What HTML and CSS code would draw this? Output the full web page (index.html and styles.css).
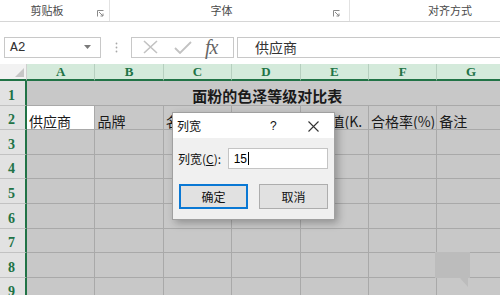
FILE: index.html
```html
<!DOCTYPE html>
<html>
<head>
<meta charset="utf-8">
<link rel="stylesheet" href="styles.css">
</head>
<body>
<div class="app">
  <div class="ribbon">
    <div class="grp g1"><span class="lbl">剪贴板</span><svg class="launch" width="7" height="7" viewBox="0 0 7 7"><path d="M0.5 6.5V0.5H6.5" fill="none" stroke="#8a8a8a"/><path d="M2 2L6 6M6 3.5V6H3.5" fill="none" stroke="#8a8a8a"/></svg></div>
    <div class="grp g2"><span class="lbl">字体</span><svg class="launch" width="7" height="7" viewBox="0 0 7 7"><path d="M0.5 6.5V0.5H6.5" fill="none" stroke="#8a8a8a"/><path d="M2 2L6 6M6 3.5V6H3.5" fill="none" stroke="#8a8a8a"/></svg></div>
    <div class="grp g3"><span class="lbl">对齐方式</span></div>
  </div>

  <div class="fbar">
    <div class="namebox"><span class="ref">A2</span><svg width="7" height="4" viewBox="0 0 7 4"><path d="M0 0H7L3.5 4Z" fill="#7a7a7a"/></svg></div>
    <svg class="dots" width="3" height="11" viewBox="0 0 3 11"><circle cx="1.5" cy="1.5" r="0.9" fill="#a8a8a8"/><circle cx="1.5" cy="5.5" r="0.9" fill="#a8a8a8"/><circle cx="1.5" cy="9.5" r="0.9" fill="#a8a8a8"/></svg>
    <div class="fxbox">
      <svg width="15" height="14" viewBox="0 0 15 14"><path d="M1 1L14 13M14 1L1 13" stroke="#c2c2c2" stroke-width="1.6"/></svg>
      <svg width="18" height="13" viewBox="0 0 18 13"><path d="M1 7L6 12L17 1" fill="none" stroke="#c2c2c2" stroke-width="1.8"/></svg>
      <span class="fx">fx</span>
    </div>
    <div class="finput">供应商</div>
  </div>

  <div class="sheet">
    <div class="corner"><span class="tri"></span></div>
    <div class="ch">A</div><div class="ch">B</div><div class="ch">C</div><div class="ch">D</div><div class="ch">E</div><div class="ch">F</div><div class="ch">G</div>

    <div class="rh">1</div>
    <div class="c title">面粉的色泽等级对比表</div>

    <div class="rh">2</div>
    <div class="c active">供应商</div><div class="c">品牌</div><div class="c">名称</div><div class="c">等级</div><div class="c">色泽值(K.</div><div class="c">合格率(%)</div><div class="c">备注</div>

    <div class="rh">3</div>
    <div class="c"></div><div class="c"></div><div class="c"></div><div class="c"></div><div class="c"></div><div class="c"></div><div class="c"></div>
    <div class="rh">4</div>
    <div class="c"></div><div class="c"></div><div class="c"></div><div class="c"></div><div class="c"></div><div class="c"></div><div class="c"></div>
    <div class="rh">5</div>
    <div class="c"></div><div class="c"></div><div class="c"></div><div class="c"></div><div class="c"></div><div class="c"></div><div class="c"></div>
    <div class="rh">6</div>
    <div class="c"></div><div class="c"></div><div class="c"></div><div class="c"></div><div class="c"></div><div class="c"></div><div class="c"></div>
    <div class="rh">7</div>
    <div class="c"></div><div class="c"></div><div class="c"></div><div class="c"></div><div class="c"></div><div class="c"></div><div class="c"></div>
    <div class="rh">8</div>
    <div class="c"></div><div class="c"></div><div class="c"></div><div class="c"></div><div class="c"></div><div class="c"></div><div class="c"></div>
    <div class="rh">9</div>
    <div class="c"></div><div class="c"></div><div class="c"></div><div class="c"></div><div class="c"></div><div class="c"></div><div class="c"></div>
  </div>

  <div class="dialog">
    <div class="dtitle"><span class="dname">列宽</span><span class="q">?</span><svg class="close" width="11" height="11" viewBox="0 0 11 11"><path d="M0.5 0.5L10.5 10.5M10.5 0.5L0.5 10.5" stroke="#333" stroke-width="1.1"/></svg></div>
    <div class="dbody">
      <div class="drow"><span class="dlbl">列宽(<u>C</u>):</span><div class="dinput">15<span class="caret"></span></div></div>
      <div class="btns"><div class="btn primary">确定</div><div class="btn">取消</div></div>
    </div>
  </div>

  <svg class="bubble" width="36" height="36" viewBox="0 0 36 36"><path d="M0 0H35V26H33L33 35L25 26H0Z" fill="#bcbcbc"/></svg>
</div>
</body>
</html>
```

FILE: styles.css
```css
* { box-sizing: border-box; }
html, body { margin: 0; padding: 0; }
body {
  width: 500px;
  height: 295px;
  overflow: hidden;
  background: #fff;
  font-family: "Noto Sans CJK SC", "Noto Sans", sans-serif;
}
.app {
  position: relative;
  width: 500px;
  height: 295px;
  overflow: hidden;
}

/* ribbon group labels */
.ribbon {
  display: flex;
  height: 22px;
  border-bottom: 1px solid #d6d6d6;
  background: #fff;
}
.grp {
  display: flex;
  align-items: center;
  height: 21px;
  border-right: 1px solid #e2e2e2;
}
.g1 { width: 110px; padding-right: 5px; }
.g2 { width: 240px; padding-right: 9px; }
.g3 { flex: 1; border-right: none; padding-left: 78px; }
.lbl {
  flex: 1;
  text-align: center;
  font-size: 11px;
  color: #4a4a4a;
  line-height: 1;
}
.g1 .lbl { padding-right: 3px; }
.g3 .lbl { flex: none; }
.launch { margin-top: 5px; }

/* formula bar */
.fbar {
  display: flex;
  align-items: center;
  height: 41px;
  padding: 9px 0 0 4px;
}
.namebox {
  width: 97px;
  height: 21px;
  border: 1px solid #c8c8c8;
  display: flex;
  align-items: center;
  justify-content: space-between;
  padding: 0 9px 0 5px;
}
.ref {
  font-family: "Liberation Mono", monospace;
  font-size: 13px;
  color: #333;
}
.dots { margin-left: 14px; margin-right: 13px; }
.fxbox {
  width: 103px;
  height: 21px;
  border: 1px solid #c8c8c8;
  display: flex;
  align-items: center;
  padding-left: 11px;
  gap: 16px;
}
.fx {
  font-family: "Liberation Serif", serif;
  font-style: italic;
  font-size: 20px;
  color: #666;
  margin-left: -3px;
  letter-spacing: -1px;
  line-height: 1;
}
.finput {
  flex: 1;
  height: 21px;
  margin-left: 3px;
  border-top: 1px solid #c8c8c8;
  border-bottom: 1px solid #c8c8c8;
  border-left: 1px solid #c8c8c8;
  padding-left: 17px;
  font-size: 14px;
  line-height: 19px;
  color: #333;
}

/* sheet */
.sheet {
  margin-top: 1px;
  display: grid;
  grid-template-columns: 27px repeat(7, 68.4px);
  grid-template-rows: 17px repeat(9, 24.6px);
  background: #c8c8c8;
}
.corner {
  position: relative;
  background: #f2f2f2;
  border-right: 1px solid #d0d0d0;
  border-bottom: 2px solid #217346;
}
.tri {
  position: absolute;
  right: 2px;
  bottom: 2px;
  width: 0;
  height: 0;
  border-left: 9px solid transparent;
  border-bottom: 9px solid #c6c6c6;
}
.ch {
  background: #d4eadb;
  border-right: 1px solid #b6cfbf;
  border-bottom: 2px solid #217346;
  text-align: center;
  font-family: "Liberation Serif", serif;
  font-weight: bold;
  font-size: 13px;
  line-height: 15px;
  color: #217346;
}
.rh {
  background: #e2e2e2;
  border-right: 2px solid #217346;
  border-bottom: 1px solid #c2c2c2;
  display: flex;
  align-items: flex-end;
  justify-content: center;
  padding-bottom: 0;
  padding-right: 2px;
  font-family: "Liberation Serif", serif;
  font-weight: bold;
  font-size: 14px;
  line-height: 19px;
  color: #217346;
}
.c {
  border-right: 1px solid #a9a9a9;
  border-bottom: 1px solid #a9a9a9;
  overflow: hidden;
  white-space: nowrap;
  font-size: 14px;
  color: #1a1a1a;
  padding: 0 0 0 2px;
  line-height: 16px;
  display: flex;
  align-items: flex-end;
}
.c.title {
  grid-column: 2 / 9;
  justify-content: center;
  font-weight: bold;
  font-size: 15px;
  line-height: 19px;
  padding: 0 0 0 2px;
  border-right: none;
}
.c.active { background: #fff; }

/* dialog */
.dialog {
  position: absolute;
  left: 172px;
  top: 112px;
  width: 163px;
  height: 108px;
  background: #f0f0f0;
  border: 1px solid #a0a0a0;
  box-shadow: 3px 3px 8px rgba(0, 0, 0, 0.28);
}
.dtitle {
  height: 25px;
  background: #fff;
  display: flex;
  align-items: center;
  padding-left: 4px;
  font-size: 12px;
  color: #111;
}
.dname { width: 93px; }
.q {
  font-family: "Liberation Sans", sans-serif;
  font-size: 12px;
  width: 38px;
}
.close { margin-top: 1px; }
.dbody { padding: 10px 6px 0 5px; }
.drow {
  display: flex;
  align-items: center;
}
.dlbl {
  width: 50px;
  font-size: 12px;
  color: #111;
}
.dinput {
  width: 101px;
  height: 21px;
  background: #fff;
  border: 1px solid #c4c4c4;
  display: flex;
  align-items: center;
  padding-left: 5px;
  font-family: "Liberation Sans", sans-serif;
  font-size: 12px;
  color: #000;
}
.caret {
  width: 1px;
  height: 13px;
  background: #000;
  margin-left: 1px;
}
.btns {
  display: flex;
  gap: 11px;
  margin-top: 15px;
  padding-left: 1px;
}
.btn {
  width: 69px;
  height: 25px;
  background: #e1e1e1;
  border: 1px solid #adadad;
  display: flex;
  align-items: center;
  justify-content: center;
  font-size: 12px;
  color: #111;
}
.btn.primary { border: 2px solid #0a78d4; }

.bubble {
  position: absolute;
  left: 435px;
  top: 252px;
}
```
